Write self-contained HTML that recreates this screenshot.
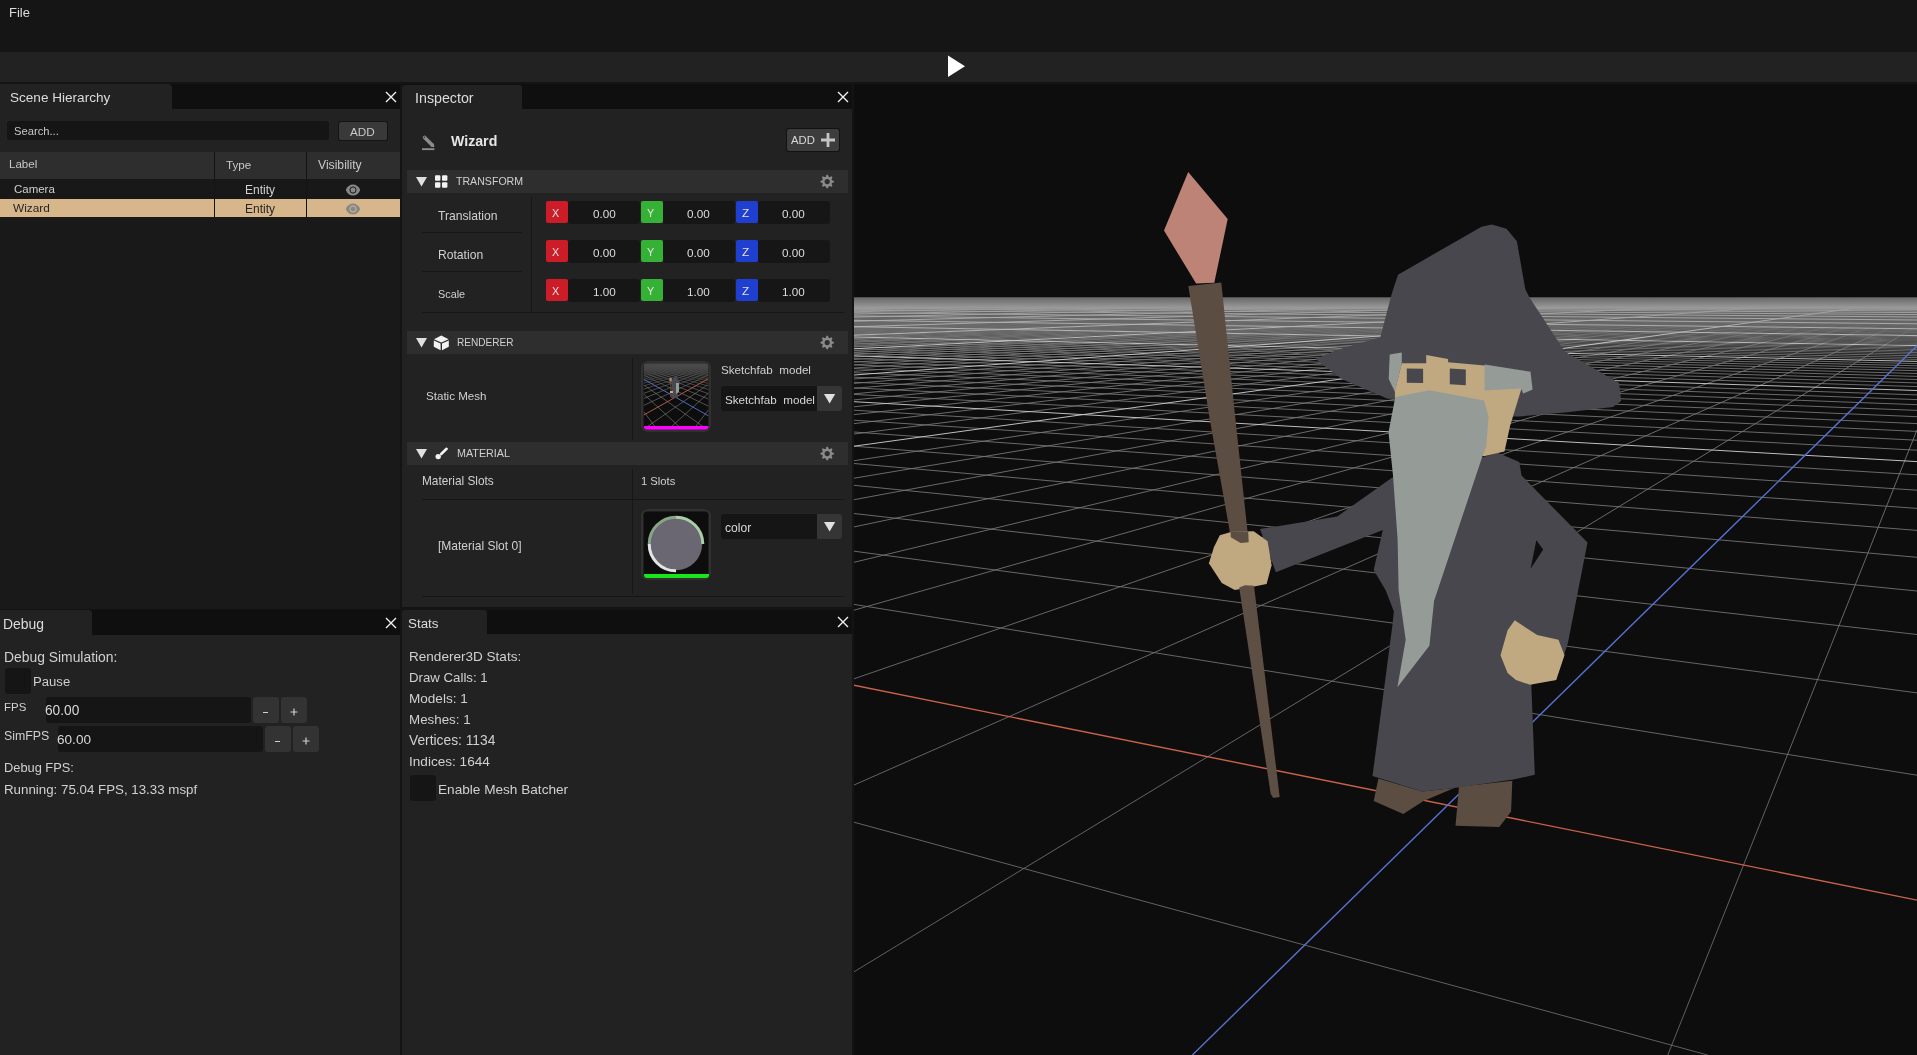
<!DOCTYPE html>
<html><head><meta charset="utf-8"><style>
*{margin:0;padding:0;box-sizing:border-box}
html,body{width:1917px;height:1055px;overflow:hidden;background:#0d0d0d}
body{position:relative;font-family:"Liberation Sans",sans-serif}
.r{position:absolute}
.t{position:absolute;white-space:pre;line-height:1;will-change:transform}
</style></head><body>
<div class="r" style="left:0px;top:0px;width:1917px;height:52px;background:#151515;"></div>
<div class="r" style="left:0px;top:52px;width:1917px;height:30px;background:#222222;"></div>
<div class="r" style="left:0px;top:82px;width:1917px;height:2px;background:#141414;"></div>
<div class="r" style="left:0px;top:84px;width:400px;height:25px;background:#0f0f0f;"></div>
<div class="r" style="left:0px;top:84px;width:172px;height:25px;background:#222222;border-top-right-radius:4px"></div>
<div class="r" style="left:0px;top:109px;width:400px;height:500px;background:#222222;"></div>
<div class="r" style="left:400px;top:84px;width:2px;height:971px;background:#141414;"></div>
<div class="r" style="left:7px;top:121px;width:322px;height:19px;background:#151515;border-radius:3px"></div>
<div class="r" style="left:339px;top:122px;width:48px;height:18px;background:#393939;border-radius:2px;box-shadow:0 0 0 1px #141414"></div>
<div class="r" style="left:0px;top:152px;width:400px;height:27px;background:#2e2e2e;"></div>
<div class="r" style="left:0px;top:179px;width:400px;height:20px;background:#181818;"></div>
<div class="r" style="left:0px;top:199px;width:400px;height:18px;background:#d7b68b;"></div>
<div class="r" style="left:0px;top:217px;width:400px;height:392px;background:#191919;"></div>
<div class="r" style="left:214px;top:152px;width:1px;height:65px;background:#141414;"></div>
<div class="r" style="left:306px;top:152px;width:1px;height:65px;background:#141414;"></div>
<div class="r" style="left:0px;top:609px;width:400px;height:1px;background:#121212;"></div>
<div class="r" style="left:0px;top:610px;width:400px;height:25px;background:#0f0f0f;"></div>
<div class="r" style="left:0px;top:610px;width:92px;height:25px;background:#222222;border-top-right-radius:3px"></div>
<div class="r" style="left:0px;top:635px;width:400px;height:420px;background:#222222;"></div>
<div class="r" style="left:402px;top:84px;width:450px;height:25px;background:#0f0f0f;"></div>
<div class="r" style="left:402px;top:85px;width:120px;height:24px;background:#222222;border-top-left-radius:3px;border-top-right-radius:3px"></div>
<div class="r" style="left:402px;top:109px;width:450px;height:498px;background:#222222;"></div>
<div class="r" style="left:402px;top:607px;width:450px;height:3px;background:#141414;"></div>
<div class="r" style="left:402px;top:610px;width:450px;height:24px;background:#0f0f0f;"></div>
<div class="r" style="left:402px;top:610px;width:85px;height:24px;background:#222222;border-top-left-radius:3px;border-top-right-radius:3px"></div>
<div class="r" style="left:402px;top:634px;width:450px;height:421px;background:#222222;"></div>
<div class="r" style="left:852px;top:84px;width:2px;height:971px;background:#141414;"></div>
<div class="r" style="left:854px;top:84px;width:1063px;height:971px;background:#0d0d0d;"></div>
<div class="r" style="left:787px;top:129px;width:52px;height:22px;background:#3d3d3d;border-radius:2px;box-shadow:0 0 0 1px #121212"></div>
<div class="r" style="left:407px;top:170px;width:441px;height:23px;background:#2e2e2e;"></div>
<div class="r" style="left:407px;top:331px;width:441px;height:23px;background:#2e2e2e;"></div>
<div class="r" style="left:407px;top:442px;width:441px;height:23px;background:#2e2e2e;"></div>
<div class="r" style="left:531px;top:197px;width:1px;height:116px;background:#161616;"></div>
<div class="r" style="left:422px;top:232px;width:100px;height:1px;background:#161616;"></div>
<div class="r" style="left:422px;top:271px;width:100px;height:1px;background:#161616;"></div>
<div class="r" style="left:422px;top:312px;width:422px;height:1px;background:#161616;"></div>
<div class="r" style="left:568px;top:201px;width:72px;height:23px;background:#161616;border-radius:3px"></div>
<div class="r" style="left:546px;top:201px;width:22px;height:22px;background:#cc1c27;border-radius:2px"></div>
<div class="r" style="left:663px;top:201px;width:72px;height:23px;background:#161616;border-radius:3px"></div>
<div class="r" style="left:641px;top:201px;width:22px;height:22px;background:#35b235;border-radius:2px"></div>
<div class="r" style="left:758px;top:201px;width:72px;height:23px;background:#161616;border-radius:3px"></div>
<div class="r" style="left:736px;top:201px;width:22px;height:22px;background:#1f3fd0;border-radius:2px"></div>
<div class="r" style="left:568px;top:240px;width:72px;height:23px;background:#161616;border-radius:3px"></div>
<div class="r" style="left:546px;top:240px;width:22px;height:22px;background:#cc1c27;border-radius:2px"></div>
<div class="r" style="left:663px;top:240px;width:72px;height:23px;background:#161616;border-radius:3px"></div>
<div class="r" style="left:641px;top:240px;width:22px;height:22px;background:#35b235;border-radius:2px"></div>
<div class="r" style="left:758px;top:240px;width:72px;height:23px;background:#161616;border-radius:3px"></div>
<div class="r" style="left:736px;top:240px;width:22px;height:22px;background:#1f3fd0;border-radius:2px"></div>
<div class="r" style="left:568px;top:279px;width:72px;height:23px;background:#161616;border-radius:3px"></div>
<div class="r" style="left:546px;top:279px;width:22px;height:22px;background:#cc1c27;border-radius:2px"></div>
<div class="r" style="left:663px;top:279px;width:72px;height:23px;background:#161616;border-radius:3px"></div>
<div class="r" style="left:641px;top:279px;width:22px;height:22px;background:#35b235;border-radius:2px"></div>
<div class="r" style="left:758px;top:279px;width:72px;height:23px;background:#161616;border-radius:3px"></div>
<div class="r" style="left:736px;top:279px;width:22px;height:22px;background:#1f3fd0;border-radius:2px"></div>
<div class="r" style="left:632px;top:358px;width:1px;height:82px;background:#161616;"></div>
<div class="r" style="left:632px;top:469px;width:1px;height:125px;background:#161616;"></div>
<div class="r" style="left:422px;top:499px;width:422px;height:1px;background:#161616;"></div>
<div class="r" style="left:422px;top:596px;width:422px;height:1px;background:#161616;"></div>
<div class="r" style="left:641px;top:361px;width:70px;height:71px;background:#0d0d0d;border-radius:6px"></div>
<svg class="r" style="left:643px;top:363px" width="66" height="64" viewBox="643 363 66 64"><defs><linearGradient id="tg" gradientUnits="userSpaceOnUse" x1="0" y1="363" x2="0" y2="395"><stop offset="0" stop-color="#484848"/><stop offset="1" stop-color="#8a8a8a"/></linearGradient></defs><path d="M706.4 363.4L708.4 363.6M703.6 363.4L708.4 363.8M700.7 363.4L708.4 364.0M697.9 363.4L708.4 364.3M695.1 363.4L708.4 364.6M692.2 363.4L708.4 364.9M689.4 363.4L708.4 365.2M686.6 363.4L708.4 365.5M683.7 363.4L708.4 365.9M680.9 363.4L708.4 366.3M678.1 363.4L708.4 366.7M675.2 363.4L708.4 367.1M672.4 363.4L708.4 367.6M669.6 363.4L708.4 368.1M666.7 363.4L708.4 368.7M663.9 363.4L708.4 369.3M661.1 363.4L708.4 370.0M658.2 363.4L708.4 370.7M655.4 363.4L708.4 371.6M652.6 363.4L708.4 372.5M649.7 363.4L708.4 373.5M646.9 363.4L708.4 374.6M644.1 363.4L708.4 375.9M643.8 363.9L708.4 377.4M643.8 364.6L708.4 379.1M643.8 365.4L708.4 381.0M643.8 366.3L708.4 383.4M643.8 367.4L708.4 386.1M643.8 368.8L708.4 389.5M643.8 370.4L708.4 393.7M643.8 372.6L708.4 399.0M643.8 375.4L708.4 406.1M643.8 385.0L703.6 426.8M643.8 394.2L679.4 426.8M643.8 411.7L655.2 426.8M645.1 363.4L643.8 363.5M647.9 363.4L643.8 363.7M650.7 363.4L643.8 364.0M653.6 363.4L643.8 364.2M656.4 363.4L643.8 364.5M659.2 363.4L643.8 364.8M662.1 363.4L643.8 365.1M664.9 363.4L643.8 365.5M667.7 363.4L643.8 365.8M670.6 363.4L643.8 366.2M673.4 363.4L643.8 366.6M676.2 363.4L643.8 367.1M679.1 363.4L643.8 367.5M681.9 363.4L643.8 368.1M684.7 363.4L643.8 368.6M687.6 363.4L643.8 369.2M690.4 363.4L643.8 369.9M693.2 363.4L643.8 370.6M696.1 363.4L643.8 371.4M698.9 363.4L643.8 372.3M701.7 363.4L643.8 373.3M704.6 363.4L643.8 374.5M707.4 363.4L643.8 375.7M708.4 363.8L643.8 377.2M708.4 364.4L643.8 378.9M708.4 365.2L643.8 380.8M708.4 366.1L643.8 383.1M708.4 367.2L643.8 385.8M708.4 368.5L643.8 389.1M708.4 370.1L643.8 393.3M708.4 372.2L643.8 398.5M708.4 375.0L643.8 405.4M708.4 384.3L647.0 426.8M708.4 393.2L671.2 426.8M708.4 409.9L695.4 426.8" stroke="url(#tg)" stroke-width="0.55" fill="none"/><path d="M708.4 378.7L643.8 415.0" stroke="#c0624a" stroke-width="0.9" fill="none"/><path d="M643.8 379.3L708.4 415.8" stroke="#5a74d0" stroke-width="0.9" fill="none"/><path d="M672 380L676 375L678 380L682 384L677 383L678 398L671 398L672 384L668 383Z" fill="#4a494f"/><path d="M676 383L679 383L679 392L676 394Z" fill="#959c98"/><rect x="669.5" y="378" width="2.2" height="3.5" fill="#c08a7a"/><rect x="670.2" y="381" width="1.2" height="16" fill="#5b4d42"/><rect x="670" y="391" width="3" height="2" fill="#c0a880"/></svg>
<div class="r" style="left:644px;top:426px;width:65px;height:4px;background:#ff00ff;border-radius:0 0 3px 3px"></div>
<div class="r" style="left:641px;top:361px;width:70px;height:71px;background:transparent;border-radius:6px;box-shadow:inset 0 0 0 2.5px #303030"></div>
<div class="r" style="left:641px;top:509px;width:70px;height:71px;background:#0d0d0d;border-radius:6px;box-shadow:inset 0 0 0 2.5px #303030"></div>
<div class="r" style="left:644px;top:574px;width:65px;height:4px;background:#19e619;border-radius:0 0 3px 3px"></div>
<div class="r" style="left:721px;top:386px;width:96px;height:25px;background:#151515;border-radius:3px 0 0 3px"></div>
<div class="r" style="left:817px;top:386px;width:25px;height:25px;background:#353535;border-radius:0 3px 3px 0"></div>
<div class="r" style="left:721px;top:514px;width:96px;height:25px;background:#151515;border-radius:3px 0 0 3px"></div>
<div class="r" style="left:817px;top:514px;width:25px;height:25px;background:#353535;border-radius:0 3px 3px 0"></div>
<div class="r" style="left:5px;top:668px;width:26px;height:26px;background:#151515;border-radius:3px"></div>
<div class="r" style="left:46px;top:697px;width:205px;height:26px;background:#151515;border-radius:3px"></div>
<div class="r" style="left:58px;top:726px;width:205px;height:26px;background:#151515;border-radius:3px"></div>
<div class="r" style="left:253px;top:697px;width:26px;height:26px;background:#333333;border-radius:3px"></div>
<div class="r" style="left:281px;top:697px;width:26px;height:26px;background:#333333;border-radius:3px"></div>
<div class="r" style="left:265px;top:726px;width:26px;height:26px;background:#333333;border-radius:3px"></div>
<div class="r" style="left:293px;top:726px;width:26px;height:26px;background:#333333;border-radius:3px"></div>
<div class="r" style="left:262.5px;top:711.5px;width:5.0px;height:1.2000000000000455px;background:#d0d0d0;"></div>
<div class="r" style="left:274.5px;top:740.5px;width:5.0px;height:1.2000000000000455px;background:#d0d0d0;"></div>
<div class="r" style="left:410px;top:775px;width:26px;height:26px;background:#151515;border-radius:3px"></div>
<svg class="r" style="left:854px;top:84px" width="1063" height="971" viewBox="854 84 1063 971">
<defs><clipPath id="cmaj"><rect x="854" y="305" width="1063" height="800"/></clipPath><linearGradient id="lg" gradientUnits="userSpaceOnUse" x1="0" y1="298" x2="0" y2="1055"><stop offset="0" stop-color="#565656"/><stop offset="0.06" stop-color="#7a7a7a"/><stop offset="0.2" stop-color="#7a7a7a"/><stop offset="1" stop-color="#6c6c6c"/></linearGradient><linearGradient id="mg" gradientUnits="userSpaceOnUse" x1="0" y1="298" x2="0" y2="1055"><stop offset="0" stop-color="#909090"/><stop offset="0.06" stop-color="#d0d0d0"/><stop offset="1" stop-color="#e0e0e0"/></linearGradient><linearGradient id="band" x1="0" y1="0" x2="0" y2="1"><stop offset="0" stop-color="#6a6a6a"/><stop offset="0.75" stop-color="#9a9a9a"/><stop offset="1" stop-color="#9a9a9a" stop-opacity="0"/></linearGradient></defs>
<g>
<path d="M855.1 298.2L854.0 298.2M862.6 298.2L854.0 298.2M866.4 298.2L854.0 298.3M870.1 298.2L854.0 298.3M873.9 298.2L854.0 298.3M877.6 298.2L854.0 298.3M881.4 298.2L854.0 298.4M885.1 298.2L854.0 298.4M888.9 298.2L854.0 298.4M892.6 298.2L854.0 298.4M900.1 298.2L854.0 298.5M903.9 298.2L854.0 298.5M907.6 298.2L854.0 298.5M911.4 298.2L854.0 298.5M915.2 298.2L854.0 298.6M918.9 298.2L854.0 298.6M922.7 298.2L854.0 298.6M926.4 298.2L854.0 298.6M930.2 298.2L854.0 298.7M937.7 298.2L854.0 298.7M941.5 298.2L854.0 298.7M945.2 298.2L854.0 298.8M949.0 298.2L854.0 298.8M952.8 298.2L854.0 298.8M956.5 298.2L854.0 298.8M960.3 298.2L854.0 298.9M964.0 298.2L854.0 298.9M967.8 298.2L854.0 298.9M975.3 298.2L854.0 299.0M979.1 298.2L854.0 299.0M982.9 298.2L854.0 299.0M986.6 298.2L854.0 299.0M990.4 298.2L854.0 299.1M994.2 298.2L854.0 299.1M997.9 298.2L854.0 299.1M1001.7 298.2L854.0 299.1M1005.5 298.2L854.0 299.2M1013.0 298.2L854.0 299.2M1016.8 298.2L854.0 299.3M1020.5 298.2L854.0 299.3M1024.3 298.2L854.0 299.3M1028.1 298.2L854.0 299.3M1031.9 298.2L854.0 299.4M1035.6 298.2L854.0 299.4M1039.4 298.2L854.0 299.4M1043.2 298.2L854.0 299.5M1050.7 298.2L854.0 299.5M1054.5 298.2L854.0 299.6M1058.3 298.2L854.0 299.6M1062.0 298.2L854.0 299.6M1065.8 298.2L854.0 299.7M1069.6 298.2L854.0 299.7M1073.4 298.2L854.0 299.7M1077.1 298.2L854.0 299.8M1080.9 298.2L854.0 299.8M1088.5 298.2L854.0 299.9M1092.3 298.2L854.0 299.9M1096.0 298.2L854.0 299.9M1099.8 298.2L854.0 300.0M1103.6 298.2L854.0 300.0M1107.4 298.2L854.0 300.0M1111.1 298.2L854.0 300.1M1114.9 298.2L854.0 300.1M1118.7 298.2L854.0 300.1M1126.3 298.2L854.0 300.2M1130.1 298.2L854.0 300.2M1133.8 298.2L854.0 300.3M1137.6 298.2L854.0 300.3M1141.4 298.2L854.0 300.4M1145.2 298.2L854.0 300.4M1149.0 298.2L854.0 300.4M1152.8 298.2L854.0 300.5M1156.6 298.2L854.0 300.5M1164.1 298.2L854.0 300.6M1167.9 298.2L854.0 300.6M1171.7 298.2L854.0 300.7M1175.5 298.2L854.0 300.7M1179.3 298.2L854.0 300.8M1183.1 298.2L854.0 300.8M1186.9 298.2L854.0 300.8M1190.6 298.2L854.0 300.9M1194.4 298.2L854.0 300.9M1202.0 298.2L854.0 301.0M1205.8 298.2L854.0 301.1M1209.6 298.2L854.0 301.1M1213.4 298.2L854.0 301.2M1217.2 298.2L854.0 301.2M1221.0 298.2L854.0 301.2M1224.8 298.2L854.0 301.3M1228.6 298.2L854.0 301.3M1232.4 298.2L854.0 301.4M1240.0 298.2L854.0 301.5M1243.8 298.2L854.0 301.5M1247.5 298.2L854.0 301.6M1251.3 298.2L854.0 301.6M1255.1 298.2L854.0 301.7M1258.9 298.2L854.0 301.7M1262.7 298.2L854.0 301.8M1266.5 298.2L854.0 301.8M1270.3 298.2L854.0 301.9M1277.9 298.2L854.0 302.0M1281.7 298.2L854.0 302.1M1285.5 298.2L854.0 302.1M1289.3 298.2L854.0 302.2M1293.1 298.2L854.0 302.2M1296.9 298.2L854.0 302.3M1300.8 298.2L854.0 302.3M1304.6 298.2L854.0 302.4M1308.4 298.2L854.0 302.5M1316.0 298.2L854.0 302.6M1319.8 298.2L854.0 302.7M1323.6 298.2L854.0 302.7M1327.4 298.2L854.0 302.8M1331.2 298.2L854.0 302.8M1335.0 298.2L854.0 302.9M1338.8 298.2L854.0 303.0M1342.6 298.2L854.0 303.0M1346.4 298.2L854.0 303.1M1354.0 298.2L854.0 303.2M1357.9 298.2L854.0 303.3M1361.7 298.2L854.0 303.4M1365.5 298.2L854.0 303.5M1369.3 298.2L854.0 303.5M1373.1 298.2L854.0 303.6M1376.9 298.2L854.0 303.7M1380.7 298.2L854.0 303.8M1384.5 298.2L854.0 303.8M1392.2 298.2L854.0 304.0M1396.0 298.2L854.0 304.1M1399.8 298.2L854.0 304.1M1403.6 298.2L854.0 304.2M1407.4 298.2L854.0 304.3M1411.2 298.2L854.0 304.4M1415.1 298.2L854.0 304.5M1418.9 298.2L854.0 304.6M1422.7 298.2L854.0 304.7M1430.3 298.2L854.0 304.8M1434.2 298.2L854.0 304.9M1438.0 298.2L854.0 305.0M1441.8 298.2L854.0 305.1M1445.6 298.2L854.0 305.2M1449.4 298.2L854.0 305.3M1453.3 298.2L854.0 305.4M1457.1 298.2L854.0 305.5M1460.9 298.2L854.0 305.6M1468.5 298.2L854.0 305.8M1472.4 298.2L854.0 305.9M1476.2 298.2L854.0 306.0M1480.0 298.2L854.0 306.1M1483.8 298.2L854.0 306.2M1487.7 298.2L854.0 306.4M1491.5 298.2L854.0 306.5M1495.3 298.2L854.0 306.6M1499.1 298.2L854.0 306.7M1506.8 298.2L854.0 306.9M1510.6 298.2L854.0 307.1M1514.5 298.2L854.0 307.2M1518.3 298.2L854.0 307.3M1522.1 298.2L854.0 307.5M1525.9 298.2L854.0 307.6M1529.8 298.2L854.0 307.7M1533.6 298.2L854.0 307.9M1537.4 298.2L854.0 308.0M1545.1 298.2L854.0 308.3M1548.9 298.2L854.0 308.4M1552.8 298.2L854.0 308.6M1556.6 298.2L854.0 308.7M1560.4 298.2L854.0 308.9M1564.3 298.2L854.0 309.1M1568.1 298.2L854.0 309.2M1571.9 298.2L854.0 309.4M1575.8 298.2L854.0 309.6M1583.5 298.2L854.0 309.9M1587.3 298.2L854.0 310.1M1591.1 298.2L854.0 310.3M1595.0 298.2L854.0 310.5M1598.8 298.2L854.0 310.6M1602.6 298.2L854.0 310.8M1606.5 298.2L854.0 311.0M1610.3 298.2L854.0 311.2M1614.2 298.2L854.0 311.4M1621.9 298.2L854.0 311.9M1625.7 298.2L854.0 312.1M1629.5 298.2L854.0 312.3M1633.4 298.2L854.0 312.5M1637.2 298.2L854.0 312.8M1641.1 298.2L854.0 313.0M1644.9 298.2L854.0 313.3M1648.8 298.2L854.0 313.5M1652.6 298.2L854.0 313.8M1660.3 298.2L854.0 314.3M1664.1 298.2L854.0 314.6M1668.0 298.2L854.0 314.9M1671.8 298.2L854.0 315.2M1675.7 298.2L854.0 315.5M1679.5 298.2L854.0 315.8M1683.4 298.2L854.0 316.1M1687.2 298.2L854.0 316.4M1691.1 298.2L854.0 316.8M1698.8 298.2L854.0 317.5M1702.6 298.2L854.0 317.8M1706.5 298.2L854.0 318.2M1710.3 298.2L854.0 318.6M1714.2 298.2L854.0 319.0M1718.0 298.2L854.0 319.4M1721.9 298.2L854.0 319.8M1725.8 298.2L854.0 320.3M1729.6 298.2L854.0 320.7M1737.3 298.2L854.0 321.7M1741.2 298.2L854.0 322.2M1745.0 298.2L854.0 322.7M1748.9 298.2L854.0 323.2M1752.7 298.2L854.0 323.8M1756.6 298.2L854.0 324.3M1760.5 298.2L854.0 324.9M1764.3 298.2L854.0 325.5M1768.2 298.2L854.0 326.2M1775.9 298.2L854.0 327.5M1779.8 298.2L854.0 328.2M1783.6 298.2L854.0 329.0M1787.5 298.2L854.0 329.7M1791.3 298.2L854.0 330.5M1795.2 298.2L854.0 331.4M1799.1 298.2L854.0 332.3M1802.9 298.2L854.0 333.2M1806.8 298.2L854.0 334.2M1814.5 298.2L854.0 336.2M1818.4 298.2L854.0 337.3M1822.3 298.2L854.0 338.5M1826.1 298.2L854.0 339.7M1830.0 298.2L854.0 341.0M1833.9 298.2L854.0 342.4M1837.7 298.2L854.0 343.9M1841.6 298.2L854.0 345.4M1845.5 298.2L854.0 347.0M1853.2 298.2L854.0 350.6M1857.1 298.2L854.0 352.6M1860.9 298.2L854.0 354.7M1864.8 298.2L854.0 357.0M1868.7 298.2L854.0 359.4M1872.6 298.2L854.0 362.1M1876.4 298.2L854.0 364.9M1880.3 298.2L854.0 368.0M1884.2 298.2L854.0 371.3M1891.9 298.2L854.0 379.0M1895.8 298.2L854.0 383.4M1899.7 298.2L854.0 388.3M1903.6 298.2L854.0 393.8M1907.4 298.2L854.0 399.9M1911.3 298.2L854.0 406.8M1915.2 298.2L854.0 414.6M1917.0 298.4L854.0 423.6M1917.0 299.0L854.0 434.0M1917.0 300.3L854.0 460.7M1917.0 301.1L854.0 478.2M1917.0 302.2L854.0 499.7M1917.0 303.5L854.0 526.9M1917.0 305.3L854.0 562.3M1917.0 307.6L854.0 610.2M1917.0 311.0L854.0 678.8M1917.0 316.2L854.0 785.0M1917.0 325.4L854.0 971.8M1917.0 429.9L1667.8 1055.0M1909.6 298.2L1917.0 298.2M1901.2 298.2L1917.0 298.2M1892.9 298.2L1917.0 298.2M1876.2 298.2L1917.0 298.3M1867.9 298.2L1917.0 298.3M1859.5 298.2L1917.0 298.3M1851.2 298.2L1917.0 298.3M1842.9 298.2L1917.0 298.4M1834.6 298.2L1917.0 298.4M1826.2 298.2L1917.0 298.4M1817.9 298.2L1917.0 298.4M1809.6 298.2L1917.0 298.4M1792.9 298.2L1917.0 298.5M1784.6 298.2L1917.0 298.5M1776.3 298.2L1917.0 298.5M1768.0 298.2L1917.0 298.5M1759.7 298.2L1917.0 298.5M1751.4 298.2L1917.0 298.5M1743.1 298.2L1917.0 298.6M1734.8 298.2L1917.0 298.6M1726.5 298.2L1917.0 298.6M1709.9 298.2L1917.0 298.6M1701.6 298.2L1917.0 298.7M1693.3 298.2L1917.0 298.7M1685.0 298.2L1917.0 298.7M1676.7 298.2L1917.0 298.7M1668.4 298.2L1917.0 298.7M1660.2 298.2L1917.0 298.8M1651.9 298.2L1917.0 298.8M1643.6 298.2L1917.0 298.8M1627.1 298.2L1917.0 298.8M1618.8 298.2L1917.0 298.9M1610.5 298.2L1917.0 298.9M1602.2 298.2L1917.0 298.9M1594.0 298.2L1917.0 298.9M1585.7 298.2L1917.0 298.9M1577.5 298.2L1917.0 299.0M1569.2 298.2L1917.0 299.0M1560.9 298.2L1917.0 299.0M1544.4 298.2L1917.0 299.0M1536.2 298.2L1917.0 299.1M1527.9 298.2L1917.0 299.1M1519.7 298.2L1917.0 299.1M1511.4 298.2L1917.0 299.1M1503.2 298.2L1917.0 299.1M1495.0 298.2L1917.0 299.2M1486.7 298.2L1917.0 299.2M1478.5 298.2L1917.0 299.2M1462.0 298.2L1917.0 299.3M1453.8 298.2L1917.0 299.3M1445.6 298.2L1917.0 299.3M1437.3 298.2L1917.0 299.3M1429.1 298.2L1917.0 299.4M1420.9 298.2L1917.0 299.4M1412.7 298.2L1917.0 299.4M1404.5 298.2L1917.0 299.4M1396.2 298.2L1917.0 299.4M1379.8 298.2L1917.0 299.5M1371.6 298.2L1917.0 299.5M1363.4 298.2L1917.0 299.5M1355.2 298.2L1917.0 299.6M1347.0 298.2L1917.0 299.6M1338.8 298.2L1917.0 299.6M1330.6 298.2L1917.0 299.6M1322.4 298.2L1917.0 299.7M1314.2 298.2L1917.0 299.7M1297.8 298.2L1917.0 299.7M1289.6 298.2L1917.0 299.8M1281.5 298.2L1917.0 299.8M1273.3 298.2L1917.0 299.8M1265.1 298.2L1917.0 299.8M1256.9 298.2L1917.0 299.9M1248.7 298.2L1917.0 299.9M1240.6 298.2L1917.0 299.9M1232.4 298.2L1917.0 300.0M1216.1 298.2L1917.0 300.0M1207.9 298.2L1917.0 300.0M1199.7 298.2L1917.0 300.1M1191.6 298.2L1917.0 300.1M1183.4 298.2L1917.0 300.1M1175.2 298.2L1917.0 300.1M1167.1 298.2L1917.0 300.2M1158.9 298.2L1917.0 300.2M1150.8 298.2L1917.0 300.2M1134.5 298.2L1917.0 300.3M1126.3 298.2L1917.0 300.3M1118.2 298.2L1917.0 300.3M1110.1 298.2L1917.0 300.4M1101.9 298.2L1917.0 300.4M1093.8 298.2L1917.0 300.4M1085.7 298.2L1917.0 300.5M1077.5 298.2L1917.0 300.5M1069.4 298.2L1917.0 300.5M1053.1 298.2L1917.0 300.6M1045.0 298.2L1917.0 300.6M1036.9 298.2L1917.0 300.7M1028.8 298.2L1917.0 300.7M1020.7 298.2L1917.0 300.7M1012.5 298.2L1917.0 300.8M1004.4 298.2L1917.0 300.8M996.3 298.2L1917.0 300.8M988.2 298.2L1917.0 300.9M972.0 298.2L1917.0 300.9M963.9 298.2L1917.0 301.0M955.8 298.2L1917.0 301.0M947.7 298.2L1917.0 301.0M939.6 298.2L1917.0 301.1M931.5 298.2L1917.0 301.1M923.4 298.2L1917.0 301.1M915.3 298.2L1917.0 301.2M907.2 298.2L1917.0 301.2M891.1 298.2L1917.0 301.3M883.0 298.2L1917.0 301.3M874.9 298.2L1917.0 301.4M866.8 298.2L1917.0 301.4M858.7 298.2L1917.0 301.4M854.0 298.2L1917.0 301.5M854.0 298.2L1917.0 301.5M854.0 298.3L1917.0 301.5M854.0 298.3L1917.0 301.6M854.0 298.3L1917.0 301.7M854.0 298.4L1917.0 301.7M854.0 298.4L1917.0 301.7M854.0 298.4L1917.0 301.8M854.0 298.4L1917.0 301.8M854.0 298.5L1917.0 301.9M854.0 298.5L1917.0 301.9M854.0 298.5L1917.0 301.9M854.0 298.5L1917.0 302.0M854.0 298.6L1917.0 302.1M854.0 298.6L1917.0 302.1M854.0 298.7L1917.0 302.2M854.0 298.7L1917.0 302.2M854.0 298.7L1917.0 302.3M854.0 298.7L1917.0 302.3M854.0 298.8L1917.0 302.3M854.0 298.8L1917.0 302.4M854.0 298.8L1917.0 302.4M854.0 298.9L1917.0 302.5M854.0 298.9L1917.0 302.6M854.0 299.0L1917.0 302.6M854.0 299.0L1917.0 302.7M854.0 299.0L1917.0 302.7M854.0 299.1L1917.0 302.8M854.0 299.1L1917.0 302.8M854.0 299.1L1917.0 302.9M854.0 299.2L1917.0 302.9M854.0 299.2L1917.0 303.0M854.0 299.3L1917.0 303.1M854.0 299.3L1917.0 303.1M854.0 299.3L1917.0 303.2M854.0 299.4L1917.0 303.2M854.0 299.4L1917.0 303.3M854.0 299.4L1917.0 303.3M854.0 299.5L1917.0 303.4M854.0 299.5L1917.0 303.5M854.0 299.6L1917.0 303.6M854.0 299.6L1917.0 303.6M854.0 299.6L1917.0 303.7M854.0 299.7L1917.0 303.7M854.0 299.7L1917.0 303.8M854.0 299.8L1917.0 303.9M854.0 299.8L1917.0 303.9M854.0 299.8L1917.0 304.0M854.0 299.9L1917.0 304.0M854.0 300.0L1917.0 304.2M854.0 300.0L1917.0 304.2M854.0 300.0L1917.0 304.3M854.0 300.1L1917.0 304.4M854.0 300.1L1917.0 304.4M854.0 300.2L1917.0 304.5M854.0 300.2L1917.0 304.6M854.0 300.3L1917.0 304.6M854.0 300.3L1917.0 304.7M854.0 300.4L1917.0 304.8M854.0 300.4L1917.0 304.9M854.0 300.5L1917.0 305.0M854.0 300.5L1917.0 305.1M854.0 300.6L1917.0 305.1M854.0 300.6L1917.0 305.2M854.0 300.7L1917.0 305.3M854.0 300.7L1917.0 305.3M854.0 300.8L1917.0 305.4M854.0 300.9L1917.0 305.6M854.0 300.9L1917.0 305.7M854.0 301.0L1917.0 305.7M854.0 301.0L1917.0 305.8M854.0 301.1L1917.0 305.9M854.0 301.1L1917.0 306.0M854.0 301.2L1917.0 306.1M854.0 301.2L1917.0 306.2M854.0 301.3L1917.0 306.2M854.0 301.4L1917.0 306.4M854.0 301.5L1917.0 306.5M854.0 301.5L1917.0 306.6M854.0 301.6L1917.0 306.7M854.0 301.6L1917.0 306.8M854.0 301.7L1917.0 306.9M854.0 301.8L1917.0 307.0M854.0 301.8L1917.0 307.1M854.0 301.9L1917.0 307.2M854.0 302.0L1917.0 307.4M854.0 302.1L1917.0 307.5M854.0 302.2L1917.0 307.6M854.0 302.2L1917.0 307.7M854.0 302.3L1917.0 307.8M854.0 302.4L1917.0 307.9M854.0 302.4L1917.0 308.0M854.0 302.5L1917.0 308.1M854.0 302.6L1917.0 308.2M854.0 302.7L1917.0 308.4M854.0 302.8L1917.0 308.6M854.0 302.9L1917.0 308.7M854.0 302.9L1917.0 308.8M854.0 303.0L1917.0 308.9M854.0 303.1L1917.0 309.0M854.0 303.2L1917.0 309.2M854.0 303.3L1917.0 309.3M854.0 303.4L1917.0 309.4M854.0 303.5L1917.0 309.7M854.0 303.6L1917.0 309.8M854.0 303.7L1917.0 309.9M854.0 303.8L1917.0 310.1M854.0 303.9L1917.0 310.2M854.0 304.0L1917.0 310.4M854.0 304.1L1917.0 310.5M854.0 304.2L1917.0 310.7M854.0 304.3L1917.0 310.8M854.0 304.5L1917.0 311.1M854.0 304.6L1917.0 311.3M854.0 304.7L1917.0 311.4M854.0 304.8L1917.0 311.6M854.0 304.9L1917.0 311.8M854.0 305.0L1917.0 311.9M854.0 305.1L1917.0 312.1M854.0 305.2L1917.0 312.3M854.0 305.3L1917.0 312.5M854.0 305.5L1917.0 312.8M854.0 305.7L1917.0 313.0M854.0 305.8L1917.0 313.2M854.0 305.9L1917.0 313.4M854.0 306.0L1917.0 313.6M854.0 306.2L1917.0 313.8M854.0 306.3L1917.0 314.0M854.0 306.4L1917.0 314.2M854.0 306.6L1917.0 314.4M854.0 306.9L1917.0 314.8M854.0 307.0L1917.0 315.1M854.0 307.2L1917.0 315.3M854.0 307.3L1917.0 315.5M854.0 307.5L1917.0 315.8M854.0 307.6L1917.0 316.0M854.0 307.8L1917.0 316.3M854.0 307.9L1917.0 316.5M854.0 308.1L1917.0 316.8M854.0 308.4L1917.0 317.3M854.0 308.6L1917.0 317.6M854.0 308.8L1917.0 317.9M854.0 309.0L1917.0 318.2M854.0 309.2L1917.0 318.4M854.0 309.4L1917.0 318.7M854.0 309.6L1917.0 319.1M854.0 309.8L1917.0 319.4M854.0 310.0L1917.0 319.7M854.0 310.4L1917.0 320.4M854.0 310.7L1917.0 320.7M854.0 310.9L1917.0 321.1M854.0 311.1L1917.0 321.4M854.0 311.4L1917.0 321.8M854.0 311.6L1917.0 322.2M854.0 311.9L1917.0 322.6M854.0 312.1L1917.0 323.0M854.0 312.4L1917.0 323.4M854.0 312.9L1917.0 324.3M854.0 313.2L1917.0 324.7M854.0 313.5L1917.0 325.2M854.0 313.8L1917.0 325.6M854.0 314.2L1917.0 326.1M854.0 314.5L1917.0 326.6M854.0 314.8L1917.0 327.2M854.0 315.2L1917.0 327.7M854.0 315.5L1917.0 328.2M854.0 316.3L1917.0 329.4M854.0 316.7L1917.0 330.0M854.0 317.1L1917.0 330.6M854.0 317.5L1917.0 331.3M854.0 317.9L1917.0 331.9M854.0 318.4L1917.0 332.6M854.0 318.8L1917.0 333.3M854.0 319.3L1917.0 334.1M854.0 319.8L1917.0 334.9M854.0 320.8L1917.0 336.5M854.0 321.4L1917.0 337.3M854.0 322.0L1917.0 338.2M854.0 322.6L1917.0 339.2M854.0 323.2L1917.0 340.1M854.0 323.8L1917.0 341.1M854.0 324.5L1917.0 342.2M854.0 325.2L1917.0 343.3M854.0 326.0L1917.0 344.4M854.0 327.5L1917.0 346.9M854.0 328.4L1917.0 348.2M854.0 329.3L1917.0 349.5M854.0 330.2L1917.0 351.0M854.0 331.2L1917.0 352.5M854.0 332.2L1917.0 354.1M854.0 333.3L1917.0 355.8M854.0 334.5L1917.0 357.6M854.0 335.7L1917.0 359.4M854.0 338.3L1917.0 363.6M854.0 339.8L1917.0 365.8M854.0 341.3L1917.0 368.2M854.0 343.0L1917.0 370.7M854.0 344.8L1917.0 373.5M854.0 346.6L1917.0 376.4M854.0 348.7L1917.0 379.5M854.0 350.9L1917.0 382.9M854.0 353.2L1917.0 386.6M854.0 358.6L1917.0 394.9M854.0 361.6L1917.0 399.6M854.0 364.9L1917.0 404.7M854.0 368.6L1917.0 410.4M854.0 372.7L1917.0 416.7M854.0 377.2L1917.0 423.6M854.0 382.2L1917.0 431.4M854.0 387.9L1917.0 440.2M854.0 394.4L1917.0 450.2M854.0 410.2L1917.0 474.8M854.0 420.2L1917.0 490.2M854.0 432.0L1917.0 508.4M854.0 446.2L1917.0 530.4M854.0 463.5L1917.0 557.3M854.0 485.3L1917.0 591.0M854.0 513.5L1917.0 634.5M854.0 551.2L1917.0 692.9M854.0 604.4L1917.0 775.2M854.0 822.2L1707.6 1055.0" stroke="url(#lg)" stroke-width="0.85" fill="none"/>
<path clip-path="url(#cmaj)" d="M858.9 298.2L854.0 298.2M896.4 298.2L854.0 298.4M934.0 298.2L854.0 298.7M971.6 298.2L854.0 298.9M1009.2 298.2L854.0 299.2M1046.9 298.2L854.0 299.5M1084.7 298.2L854.0 299.8M1122.5 298.2L854.0 300.2M1160.3 298.2L854.0 300.6M1198.2 298.2L854.0 301.0M1236.2 298.2L854.0 301.4M1274.1 298.2L854.0 302.0M1312.2 298.2L854.0 302.5M1350.2 298.2L854.0 303.2M1388.4 298.2L854.0 303.9M1426.5 298.2L854.0 304.7M1464.7 298.2L854.0 305.7M1503.0 298.2L854.0 306.8M1541.3 298.2L854.0 308.1M1579.6 298.2L854.0 309.7M1618.0 298.2L854.0 311.7M1656.5 298.2L854.0 314.1M1694.9 298.2L854.0 317.1M1733.5 298.2L854.0 321.2M1772.0 298.2L854.0 326.8M1810.7 298.2L854.0 335.2M1849.3 298.2L854.0 348.8M1888.1 298.2L854.0 375.0M1917.0 299.6L854.0 446.2M1884.6 298.2L1917.0 298.3M1801.3 298.2L1917.0 298.4M1718.2 298.2L1917.0 298.6M1635.3 298.2L1917.0 298.8M1552.7 298.2L1917.0 299.0M1470.2 298.2L1917.0 299.2M1388.0 298.2L1917.0 299.5M1306.0 298.2L1917.0 299.7M1224.2 298.2L1917.0 300.0M1142.6 298.2L1917.0 300.3M1061.3 298.2L1917.0 300.6M980.1 298.2L1917.0 300.9M899.1 298.2L1917.0 301.2M854.0 298.3L1917.0 301.6M854.0 298.6L1917.0 302.0M854.0 298.9L1917.0 302.5M854.0 299.2L1917.0 303.0M854.0 299.5L1917.0 303.5M854.0 299.9L1917.0 304.1M854.0 300.3L1917.0 304.8M854.0 300.8L1917.0 305.5M854.0 301.4L1917.0 306.3M854.0 302.0L1917.0 307.3M854.0 302.6L1917.0 308.3M854.0 303.4L1917.0 309.5M854.0 304.4L1917.0 311.0M854.0 305.4L1917.0 312.6M854.0 306.7L1917.0 314.6M854.0 308.3L1917.0 317.0M854.0 310.2L1917.0 320.0M854.0 312.7L1917.0 323.8M854.0 315.9L1917.0 328.8M854.0 320.3L1917.0 335.6M854.0 326.7L1917.0 345.6M854.0 337.0L1917.0 361.4M854.0 355.8L1917.0 390.5M854.0 401.7L1917.0 461.6" stroke="url(#mg)" stroke-width="0.9" fill="none"/>
<rect x="854" y="298" width="1063" height="13" fill="url(#band)"/>
<path d="M854.0 685.2L1917.0 900.1" stroke="#c8624a" stroke-width="1.4" fill="none"/>
<path d="M1917.0 345.8L1192.4 1055.0" stroke="#5672d2" stroke-width="1.4" fill="none"/>
</g>
<path d="M1378.4 778.4 L1422.3 791.4 L1454.3 787.9 L1423.5 800.9 L1403.3 813.9 L1373.7 800.9Z" fill="#5b4d42"/><path d="M1459.0 786.7 L1512.3 780.8 L1511.1 811.6 L1499.3 827.0 L1455.5 825.8Z" fill="#5b4d42"/><path d="M1482.9 457.3 L1497.7 452.8 L1519.3 461.9 L1521.5 475.5 L1587.5 542.6 L1568.0 642.5 L1556.0 680.0 L1531.3 683.6 L1534.8 774.8 L1513.5 779.6 L1454.3 787.9 L1422.3 791.4 L1372.5 776.0 L1392.7 623.2 L1393.8 611.3 L1385.5 590.0 L1373.7 569.9 L1382.8 530.1 L1275.9 572.2 L1260.0 529.0 L1337.3 516.5 L1391.9 477.8 L1430.0 470.0Z" fill="#48474d"/><path d="M1536.3 540.3 L1543.2 549.4 L1530.6 568.8Z" fill="#0e0e0e"/><path d="M1188.3 285.9 L1221.3 282.5 L1235.5 420.0 L1248.7 542.3 L1240.7 542.9 L1230.8 537.3 L1209.9 420.0Z" fill="#5b4d42"/><path d="M1188.2 172.1 L1227.7 219.1 L1214.3 282.8 L1196.1 283.6 L1164.0 230.5Z" fill="#bd8377"/><path d="M1219.8 535.3 L1231.8 531.7 L1253.7 531.3 L1267.6 541.3 L1271.6 565.2 L1266.6 584.1 L1251.7 587.0 L1234.8 590.0 L1221.8 583.1 L1208.9 563.2 L1213.9 547.3Z" fill="#c0a880"/><path d="M1230.5 531.5 L1248.2 531.5 L1248.7 542.3 L1240.7 542.9 L1230.8 537.3Z" fill="#5b4d42"/><path d="M1239.2 587.5 L1245.0 585.2 L1254.0 585.8 L1279.7 797.0 L1273.3 798.0 L1270.7 794.0Z" fill="#5d4f44"/><path d="M1514.7 620.3 L1537.2 635.0 L1558.5 639.8 L1564.5 655.2 L1556.2 680.0 L1530.1 684.8 L1515.9 680.0 L1507.6 672.9 L1500.5 655.2 L1507.6 630.3Z" fill="#c0a880"/><path d="M1315.6 359.1 L1337.5 349.8 L1380.3 337.2 L1391.8 293.4 L1398.0 274.7 L1481.5 226.7 L1491.9 224.6 L1506.5 228.8 L1516.9 241.3 L1525.3 289.3 L1529.5 297.6 L1564.9 351.8 L1619.1 383.1 L1621.2 400.9 L1612.9 407.1 L1567.0 412.3 L1519.0 416.5 L1508.6 416.5 L1480.0 400.0 L1387.6 398.8 L1341.7 379.0Z" fill="#48474d"/><path d="M1401.8 363.3 L1426.2 363.3 L1426.2 355.0 L1448.1 359.1 L1448.1 362.3 L1484.6 365.4 L1521.5 388.4 L1510.2 425.5 L1504.5 451.6 L1484.0 456.2 L1430.0 440.0 L1394.9 398.8 L1395.0 390.0Z" fill="#c0a880"/><path d="M1389.7 354.5 L1401.8 352.5 L1401.8 363.3 L1396.5 385.0 L1395.0 392.0 L1388.7 379.0Z" fill="#959c98"/><path d="M1484.6 364.4 L1530.5 371.7 L1532.6 389.4 L1523.2 393.6 L1521.1 388.4 L1484.6 390.4Z" fill="#959c98"/><path d="M1406.8 368.5 L1423.1 368.8 L1423.1 383.1 L1406.8 382.8Z" fill="#48474d"/><path d="M1449.8 368.5 L1465.8 369.5 L1465.8 385.2 L1449.8 384.2Z" fill="#48474d"/><path d="M1395.3 397.1 L1429.4 390.2 L1484.0 400.5 L1488.6 416.4 L1486.3 446.0 L1481.7 458.5 L1434.1 600.7 L1429.4 645.7 L1397.4 687.2 L1405.7 639.8 L1398.6 590.0 L1397.6 539.2 L1393.0 475.5 L1388.5 432.3Z" fill="#959c98"/>
</svg>
<svg class="r" style="left:385px;top:91px" width="12" height="12" viewBox="0 0 12 12"><path d="M1 1L11 11M11 1L1 11" stroke="#f0f0f0" stroke-width="1.4"/></svg>
<svg class="r" style="left:837px;top:91px" width="12" height="12" viewBox="0 0 12 12"><path d="M1 1L11 11M11 1L1 11" stroke="#f0f0f0" stroke-width="1.4"/></svg>
<svg class="r" style="left:385px;top:617px" width="12" height="12" viewBox="0 0 12 12"><path d="M1 1L11 11M11 1L1 11" stroke="#f0f0f0" stroke-width="1.4"/></svg>
<svg class="r" style="left:837px;top:616px" width="12" height="12" viewBox="0 0 12 12"><path d="M1 1L11 11M11 1L1 11" stroke="#f0f0f0" stroke-width="1.4"/></svg>
<svg class="r" style="left:940px;top:50px" width="40" height="32" viewBox="940 50 40 32"><path d="M948 55.6L965 66.3L948 77Z" fill="#ffffff"/></svg>
<svg class="r" style="left:418px;top:132px" width="20" height="20" viewBox="418 132 20 20"><path d="M424.6 137.4L432.2 145.0" stroke="#8c8c8c" stroke-width="3.6" stroke-linecap="round"/><path d="M430.4 146.6L434.4 147.2L433.8 143.2Z" fill="#8c8c8c"/><circle cx="424.4" cy="137.2" r="0.8" fill="#333"/><rect x="422" y="148.2" width="12.4" height="1.9" fill="#8c8c8c"/></svg>
<svg class="r" style="left:818px;top:130px" width="20" height="20" viewBox="818 130 20 20"><path d="M821 140H835M828 133V147" stroke="#c4c4c4" stroke-width="2.8"/></svg>
<svg class="r" style="left:412px;top:170px" width="20" height="23" viewBox="412 170 20 23"><path d="M416 176.9H427L421.5 186.4Z" fill="#e0e0e0"/></svg>
<svg class="r" style="left:818px;top:170px" width="20" height="23" viewBox="818 170 20 23"><path d="M833.97 180.93 L833.97 182.27 L831.98 183.05 L831.61 183.96 L832.46 185.91 L831.51 186.86 L829.56 186.01 L828.65 186.38 L827.87 188.37 L826.53 188.37 L825.75 186.38 L824.84 186.01 L822.89 186.86 L821.94 185.91 L822.79 183.96 L822.42 183.05 L820.43 182.27 L820.43 180.93 L822.42 180.15 L822.79 179.24 L821.94 177.29 L822.89 176.34 L824.84 177.19 L825.75 176.82 L826.53 174.83 L827.87 174.83 L828.65 176.82 L829.56 177.19 L831.51 176.34 L832.46 177.29 L831.61 179.24 L831.98 180.15Z" fill="#8a8a8a"/><circle cx="827.2" cy="181.6" r="2.6" fill="#2e2e2e"/></svg>
<svg class="r" style="left:412px;top:331px" width="20" height="23" viewBox="412 331 20 23"><path d="M416 337.9H427L421.5 347.4Z" fill="#e0e0e0"/></svg>
<svg class="r" style="left:818px;top:331px" width="20" height="23" viewBox="818 331 20 23"><path d="M833.97 341.93 L833.97 343.27 L831.98 344.05 L831.61 344.96 L832.46 346.91 L831.51 347.86 L829.56 347.01 L828.65 347.38 L827.87 349.37 L826.53 349.37 L825.75 347.38 L824.84 347.01 L822.89 347.86 L821.94 346.91 L822.79 344.96 L822.42 344.05 L820.43 343.27 L820.43 341.93 L822.42 341.15 L822.79 340.24 L821.94 338.29 L822.89 337.34 L824.84 338.19 L825.75 337.82 L826.53 335.83 L827.87 335.83 L828.65 337.82 L829.56 338.19 L831.51 337.34 L832.46 338.29 L831.61 340.24 L831.98 341.15Z" fill="#8a8a8a"/><circle cx="827.2" cy="342.6" r="2.6" fill="#2e2e2e"/></svg>
<svg class="r" style="left:412px;top:442px" width="20" height="23" viewBox="412 442 20 23"><path d="M416 448.9H427L421.5 458.4Z" fill="#e0e0e0"/></svg>
<svg class="r" style="left:818px;top:442px" width="20" height="23" viewBox="818 442 20 23"><path d="M833.97 452.93 L833.97 454.27 L831.98 455.05 L831.61 455.96 L832.46 457.91 L831.51 458.86 L829.56 458.01 L828.65 458.38 L827.87 460.37 L826.53 460.37 L825.75 458.38 L824.84 458.01 L822.89 458.86 L821.94 457.91 L822.79 455.96 L822.42 455.05 L820.43 454.27 L820.43 452.93 L822.42 452.15 L822.79 451.24 L821.94 449.29 L822.89 448.34 L824.84 449.19 L825.75 448.82 L826.53 446.83 L827.87 446.83 L828.65 448.82 L829.56 449.19 L831.51 448.34 L832.46 449.29 L831.61 451.24 L831.98 452.15Z" fill="#8a8a8a"/><circle cx="827.2" cy="453.6" r="2.6" fill="#2e2e2e"/></svg>
<svg class="r" style="left:433px;top:173px" width="18" height="18" viewBox="433 173 18 18"><rect x="435" y="175.3" width="5.4" height="5.4" rx="1" fill="#f2f2f2"/><rect x="442" y="175.3" width="5.4" height="5.4" rx="1" fill="#f2f2f2"/><rect x="435" y="182.3" width="5.4" height="5.4" rx="1" fill="#f2f2f2"/><rect x="442" y="182.3" width="5.4" height="5.4" rx="1" fill="#f2f2f2"/></svg>
<svg class="r" style="left:432px;top:334px" width="18" height="18" viewBox="432 334 18 18"><path d="M441.3 335.6L448.6 339.2L441.3 342.6L434 339.2Z" fill="#f2f2f2"/><path d="M433.8 340.4L440.6 343.6V350.2L433.8 346.8Z" fill="#f2f2f2"/><path d="M448.8 340.4L442 343.6V350.2L448.8 346.8Z" fill="#f2f2f2"/></svg>
<svg class="r" style="left:432px;top:445px" width="18" height="18" viewBox="432 445 18 18"><path d="M446.6 448.8L441.2 454.0" stroke="#f2f2f2" stroke-width="2.6" stroke-linecap="round"/><circle cx="438.2" cy="456.6" r="2.7" fill="#f2f2f2"/></svg>
<svg class="r" style="left:644px;top:512px" width="64" height="62" viewBox="644 512 64 62"><circle cx="676" cy="544" r="26.2" fill="#6a6672"/><path d="M649.2 544 A26.8 26.8 0 0 1 676 517.2" stroke="#8aa585" stroke-width="3" fill="none"/><path d="M676 517.2 A26.8 26.8 0 0 1 702.8 544" stroke="#a8cfa8" stroke-width="3" fill="none"/><path d="M649.2 544 A26.8 26.8 0 0 0 676 570.8" stroke="#e4e4e4" stroke-width="3" fill="none"/></svg>
<svg class="r" style="left:820px;top:386px" width="20" height="25" viewBox="820 386 20 25"><path d="M824 393.9H835.2L829.6 403.4Z" fill="#e0e0e0"/></svg>
<svg class="r" style="left:820px;top:514px" width="20" height="25" viewBox="820 514 20 25"><path d="M824 521.9H835.2L829.6 531.4Z" fill="#e0e0e0"/></svg>
<svg class="r" style="left:288.5px;top:706.6px" width="10" height="10" viewBox="0 0 10 10"><path d="M1.5 5H8.5M5 1.5V8.5" stroke="#d0d0d0" stroke-width="1.2"/></svg>
<svg class="r" style="left:300.5px;top:735.6px" width="10" height="10" viewBox="0 0 10 10"><path d="M1.5 5H8.5M5 1.5V8.5" stroke="#d0d0d0" stroke-width="1.2"/></svg>
<svg class="r" style="left:344px;top:182.4px" width="18" height="16" viewBox="344 182.4 18 16"><path d="M345.8 190.4 C348.5 183.0 357.5 183.0 360.2 190.4 C357.5 197.8 348.5 197.8 345.8 190.4Z" fill="#888888"/><circle cx="353" cy="190.4" r="3.1" fill="none" stroke="#181818" stroke-width="1.0"/></svg>
<svg class="r" style="left:344px;top:201.4px" width="18" height="16" viewBox="344 201.4 18 16"><path d="M345.8 209.4 C348.5 202.0 357.5 202.0 360.2 209.4 C357.5 216.8 348.5 216.8 345.8 209.4Z" fill="#888888"/><circle cx="353" cy="209.4" r="3.1" fill="none" stroke="#d7b68b" stroke-width="1.0"/></svg>
<div class="t" style="left:8.6px;top:6.2px;font-size:13.03px;color:#dcdcdc;font-weight:400">File</div>
<div class="t" style="left:10.1px;top:91.2px;font-size:13.57px;color:#dcdcdc;font-weight:400">Scene Hierarchy</div>
<div class="t" style="left:414.7px;top:91.4px;font-size:14.25px;color:#dcdcdc;font-weight:400">Inspector</div>
<div class="t" style="left:3.3px;top:617.7px;font-size:13.91px;color:#dcdcdc;font-weight:400">Debug</div>
<div class="t" style="left:408.4px;top:616.6px;font-size:13.38px;color:#dcdcdc;font-weight:400">Stats</div>
<div class="t" style="left:13.5px;top:126.3px;font-size:11.19px;color:#c8c8c8;font-weight:400">Search...</div>
<div class="t" style="left:349.8px;top:126.1px;font-size:11.75px;color:#c8c8c8;font-weight:400">ADD</div>
<div class="t" style="left:8.5px;top:159.2px;font-size:11.57px;color:#c8c8c8;font-weight:400">Label</div>
<div class="t" style="left:226.3px;top:159.1px;font-size:11.67px;color:#c8c8c8;font-weight:400">Type</div>
<div class="t" style="left:318.0px;top:158.7px;font-size:12.16px;color:#c8c8c8;font-weight:400">Visibility</div>
<div class="t" style="left:13.7px;top:184.0px;font-size:11.47px;color:#d0d0d0;font-weight:400">Camera</div>
<div class="t" style="left:244.6px;top:183.5px;font-size:11.99px;color:#d0d0d0;font-weight:400">Entity</div>
<div class="t" style="left:13.1px;top:202.8px;font-size:11.83px;color:#262626;font-weight:400">Wizard</div>
<div class="t" style="left:244.6px;top:202.6px;font-size:11.99px;color:#262626;font-weight:400">Entity</div>
<div class="t" style="left:451.3px;top:134.2px;font-size:14.16px;color:#e6e6e6;font-weight:700">Wizard</div>
<div class="t" style="left:791.1px;top:135.4px;font-size:11.32px;color:#d8d8d8;font-weight:400">ADD</div>
<div class="t" style="left:456.3px;top:176.0px;font-size:10.60px;color:#d0d0d0;font-weight:400">TRANSFORM</div>
<div class="t" style="left:438.4px;top:210.1px;font-size:12.14px;color:#d0d0d0;font-weight:400">Translation</div>
<div class="t" style="left:438.4px;top:249.2px;font-size:12.14px;color:#d0d0d0;font-weight:400">Rotation</div>
<div class="t" style="left:438.4px;top:289.2px;font-size:10.87px;color:#d0d0d0;font-weight:400">Scale</div>
<div class="t" style="left:456.7px;top:337.6px;font-size:10.07px;color:#d0d0d0;font-weight:400">RENDERER</div>
<div class="t" style="left:426.4px;top:390.0px;font-size:11.60px;color:#d0d0d0;font-weight:400">Static Mesh</div>
<div class="t" style="left:720.5px;top:363.8px;font-size:11.65px;color:#d0d0d0;font-weight:400">Sketchfab  model</div>
<div class="t" style="left:724.5px;top:393.9px;font-size:11.65px;color:#d8d8d8;font-weight:400">Sketchfab  model</div>
<div class="t" style="left:456.7px;top:448.0px;font-size:10.76px;color:#d0d0d0;font-weight:400">MATERIAL</div>
<div class="t" style="left:421.6px;top:476.0px;font-size:11.85px;color:#d0d0d0;font-weight:400">Material Slots</div>
<div class="t" style="left:641.3px;top:476.3px;font-size:11.22px;color:#d0d0d0;font-weight:400">1 Slots</div>
<div class="t" style="left:438.0px;top:540.3px;font-size:12.03px;color:#d0d0d0;font-weight:400">[Material Slot 0]</div>
<div class="t" style="left:724.8px;top:521.5px;font-size:12.09px;color:#d8d8d8;font-weight:400">color</div>
<div class="t" style="left:4.2px;top:650.5px;font-size:13.89px;color:#d0d0d0;font-weight:400">Debug Simulation:</div>
<div class="t" style="left:32.5px;top:675.3px;font-size:13.12px;color:#d0d0d0;font-weight:400">Pause</div>
<div class="t" style="left:4.4px;top:702.4px;font-size:11.47px;color:#d0d0d0;font-weight:400">FPS</div>
<div class="t" style="left:45.1px;top:704.2px;font-size:13.71px;color:#d8d8d8;font-weight:400">60.00</div>
<div class="t" style="left:4.3px;top:730.3px;font-size:12.35px;color:#d0d0d0;font-weight:400">SimFPS</div>
<div class="t" style="left:57.3px;top:733.4px;font-size:13.59px;color:#d8d8d8;font-weight:400">60.00</div>
<div class="t" style="left:4.3px;top:762.3px;font-size:12.83px;color:#d0d0d0;font-weight:400">Debug FPS:</div>
<div class="t" style="left:4.3px;top:782.5px;font-size:13.32px;color:#d0d0d0;font-weight:400">Running: 75.04 FPS, 13.33 mspf</div>
<div class="t" style="left:409.4px;top:649.8px;font-size:13.56px;color:#d0d0d0;font-weight:400">Renderer3D Stats:</div>
<div class="t" style="left:409.4px;top:671.2px;font-size:13.24px;color:#d0d0d0;font-weight:400">Draw Calls: 1</div>
<div class="t" style="left:409.4px;top:691.8px;font-size:13.56px;color:#d0d0d0;font-weight:400">Models: 1</div>
<div class="t" style="left:409.4px;top:713.1px;font-size:13.37px;color:#d0d0d0;font-weight:400">Meshes: 1</div>
<div class="t" style="left:409.4px;top:733.8px;font-size:13.79px;color:#d0d0d0;font-weight:400">Vertices: 1134</div>
<div class="t" style="left:409.4px;top:754.9px;font-size:13.60px;color:#d0d0d0;font-weight:400">Indices: 1644</div>
<div class="t" style="left:437.7px;top:783.0px;font-size:13.61px;color:#d0d0d0;font-weight:400">Enable Mesh Batcher</div>
<div class="t" style="left:592.6px;top:208.1px;font-size:11.71px;color:#dcdcdc;font-weight:400">0.00</div>
<div class="t" style="left:687.4px;top:208.1px;font-size:11.71px;color:#dcdcdc;font-weight:400">0.00</div>
<div class="t" style="left:782.4px;top:208.1px;font-size:11.71px;color:#dcdcdc;font-weight:400">0.00</div>
<div class="t" style="left:592.6px;top:247.2px;font-size:11.71px;color:#dcdcdc;font-weight:400">0.00</div>
<div class="t" style="left:687.4px;top:247.2px;font-size:11.71px;color:#dcdcdc;font-weight:400">0.00</div>
<div class="t" style="left:782.4px;top:247.2px;font-size:11.71px;color:#dcdcdc;font-weight:400">0.00</div>
<div class="t" style="left:592.6px;top:286.1px;font-size:11.71px;color:#dcdcdc;font-weight:400">1.00</div>
<div class="t" style="left:687.4px;top:286.1px;font-size:11.71px;color:#dcdcdc;font-weight:400">1.00</div>
<div class="t" style="left:782.4px;top:286.1px;font-size:11.71px;color:#dcdcdc;font-weight:400">1.00</div>
<div class="t" style="left:552.1px;top:207.9px;font-size:10.79px;color:#e4e4e4;font-weight:400">X</div>
<div class="t" style="left:647.1px;top:207.9px;font-size:10.79px;color:#e4e4e4;font-weight:400">Y</div>
<div class="t" style="left:742.0px;top:207.0px;font-size:11.79px;color:#e4e4e4;font-weight:400">Z</div>
<div class="t" style="left:552.1px;top:246.9px;font-size:10.79px;color:#e4e4e4;font-weight:400">X</div>
<div class="t" style="left:647.1px;top:246.9px;font-size:10.79px;color:#e4e4e4;font-weight:400">Y</div>
<div class="t" style="left:742.0px;top:246.0px;font-size:11.79px;color:#e4e4e4;font-weight:400">Z</div>
<div class="t" style="left:552.1px;top:285.9px;font-size:10.79px;color:#e4e4e4;font-weight:400">X</div>
<div class="t" style="left:647.1px;top:285.9px;font-size:10.79px;color:#e4e4e4;font-weight:400">Y</div>
<div class="t" style="left:742.0px;top:285.0px;font-size:11.79px;color:#e4e4e4;font-weight:400">Z</div>
</body></html>
